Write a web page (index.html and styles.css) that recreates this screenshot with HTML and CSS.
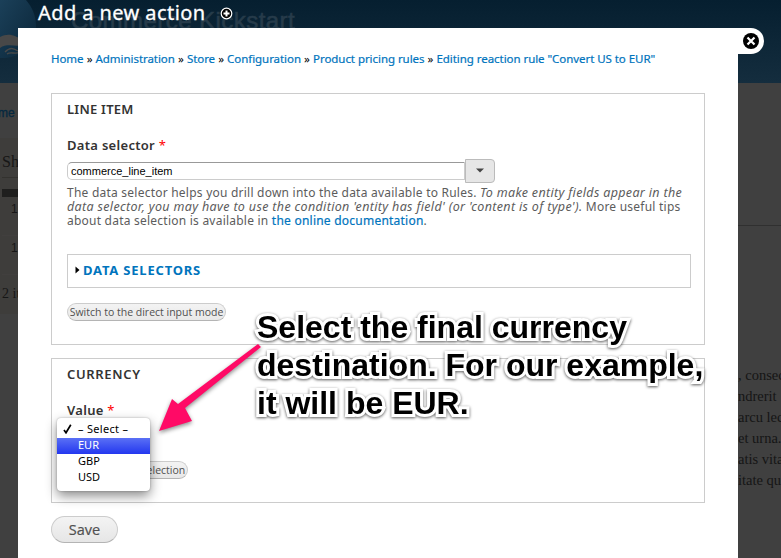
FILE: index.html
```html
<!DOCTYPE html>
<html lang="en">
<head>
<meta charset="utf-8">
<title>Add a new action</title>
<link rel="stylesheet" href="styles.css">
</head>
<body>
<div class="site">
  <header class="site-header">
    <svg class="drop" width="40" height="62" viewBox="0 0 40 62">
      <defs><linearGradient id="dg" x1="0" y1="0" x2="1" y2="1"><stop offset="0" stop-color="#1b4059"/><stop offset="1" stop-color="#0a2538"/></linearGradient></defs>
      <path d="M0 0H26C32 7 36 15 36 27C36 46 20 59 0 58Z" fill="url(#dg)"/>
      <path d="M0 37C8 33 14 34 27 43C19 49 8 42 0 48Z" fill="#484848"/>
      <path d="M5 52C10 47 13 48 18 51M7 54C11 51 15 55 20 52" stroke="#484848" stroke-width="1.3" fill="none"/>
    </svg>
    <span class="site-name">Commerce Kickstart</span>
  </header>
  <div class="site-body">
    <aside class="left">
      <div class="crumb">me</div>
      <div class="cart">
        <div class="cart-title">Sh</div>
        <div class="cart-bar"></div>
        <div class="cart-row">1</div>
        <div class="cart-row">1</div>
        <div class="cart-total">2 it</div>
      </div>
    </aside>
    <section class="right">
      <div class="rule"></div>
      <div class="lorem">, consec<br>ndrerit<br>arcu lec<br>et urna.<br>atis vita<br>itate qu</div>
    </section>
  </div>
</div>

<div class="overlay">
  <div class="title-bar">
    <h1>Add a new action</h1>
    <svg width="13" height="13" viewBox="0 0 13 13"><circle cx="6.5" cy="6.5" r="5.3" fill="#000" stroke="#fff" stroke-width="1.2"/><path d="M6.5 3.5v6M3.5 6.5h6" stroke="#fff" stroke-width="2"/></svg>
  </div>
  <main class="panel">
    <div class="close"><svg width="16" height="16" viewBox="0 0 16 16"><circle cx="8" cy="8" r="8"/><path d="M4.5 4.5l7 7M11.5 4.5l-7 7" stroke="#fff" stroke-width="2.2"/></svg></div>
    <nav class="breadcrumb"><a>Home</a> <i>»</i> <a>Administration</a> <i>»</i> <a>Store</a> <i>»</i> <a>Configuration</a> <i>»</i> <a>Product pricing rules</a> <i>»</i> <a>Editing reaction rule "Convert US to EUR"</a></nav>

    <section class="fieldset line-item">
      <h2>LINE ITEM</h2>
      <label>Data selector <b>*</b></label>
      <div class="combo"><div class="input">commerce_line_item</div><div class="combo-btn"><svg width="8" height="5" viewBox="0 0 8 5"><path d="M0 0.5H8L4 4.5Z" fill="#444"/></svg></div></div>
      <div class="help">
        <div>The data selector helps you drill down into the data available to Rules. <em>To make entity fields appear in the</em></div>
        <div><em>data selector, you may have to use the condition 'entity has field' (or 'content is of type').</em> More useful tips</div>
        <div>about data selection is available in <a>the online documentation</a>.</div>
      </div>
      <div class="selectors"><svg width="5" height="8" viewBox="0 0 5 8"><path d="M0.5 0.5L4.5 4L0.5 7.5Z"/></svg><a>DATA SELECTORS</a></div>
      <div class="pill">Switch to the direct input mode</div>
    </section>

    <section class="fieldset currency">
      <h2>CURRENCY</h2>
      <label>Value <b>*</b></label>
      <div class="pill">Switch to data selection</div>
      <div class="menu">
        <div class="option first"><svg class="check" width="9" height="10" viewBox="0 0 9 10"><path d="M1 6L3 8.8L7.8 0.8" fill="none" stroke="#000" stroke-width="1.7"/></svg>– Select –</div>
        <div class="option active">EUR</div>
        <div class="option">GBP</div>
        <div class="option">USD</div>
      </div>
    </section>
    <div class="save">Save</div>
  </main>
</div>

<svg class="arrow" width="120" height="110" viewBox="0 0 120 110"><path d="M108 4L111 7L35 68L42 81L9 91L22 59L28 64Z" fill="#ff0a66"/></svg>
<div class="callout"><div>Select the final currency</div><div>destination. For our example,</div><div>it will be EUR.</div></div>
</body>
</html>
```

FILE: styles.css
```css
* { box-sizing: border-box; }
body { margin: 0; width: 781px; height: 558px; overflow: hidden; position: relative; background: #404040; font-family: "Noto Sans", "Open Sans", sans-serif; }
h1, h2 { margin: 0; }

.site { height: 558px; display: flex; flex-direction: column; }
.site-header { height: 83px; background: linear-gradient(#061f30, #142d3e); display: flex; align-items: flex-start; overflow: hidden; }
.drop { flex: none; }
.site-name { margin: 8px 0 0 31px; font: 24px/26px "Liberation Sans", sans-serif; color: #263b4a; -webkit-text-stroke: 0.6px #263b4a; letter-spacing: 0.45px; white-space: nowrap; }
.site-body { flex: 1; display: flex; justify-content: space-between; }
.left { width: 18px; overflow: hidden; white-space: nowrap; }
.crumb { height: 55px; padding: 21px 0 0 0; margin-left: -2px; font: 12px/18px "Liberation Sans", sans-serif; color: #05283f; -webkit-text-stroke: 0.3px #05283f; }
.cart { height: 176px; background: #3e3d3b; padding-left: 2px; font: 14px/18px "Liberation Serif", serif; color: #161616; }
.cart-title { height: 40px; padding-top: 15px; font-size: 16px; border-bottom: 1px solid #33322f; }
.cart-bar { height: 8px; margin-top: 11px; background: #1f1f1e; }
.cart-row { height: 39px; padding: 3px 0 0 9px; font: 12px/18px "Liberation Sans", sans-serif; border-bottom: 1px solid #413f3e; }
.cart-total { padding-top: 10px; }
.right { width: 43px; overflow: hidden; white-space: nowrap; }
.rule { height: 143px; border-bottom: 1px solid #303030; }
.lorem { margin-top: 139px; font: 14.5px/21px "Liberation Serif", serif; color: #151515; }

.overlay { position: absolute; inset: 0; padding: 0 43px 0 18px; display: flex; flex-direction: column; }
.title-bar { height: 28px; padding-left: 20px; display: flex; color: #fff; }
.title-bar h1 { width: 182px; font: 20px/26px "Noto Sans", sans-serif; letter-spacing: 0.42px; white-space: nowrap; -webkit-text-stroke: 0.3px #fff; }
.title-bar svg { margin-top: 7px; }
.panel { position: relative; flex: 1; background: #fff; padding: 23px 33px 0; }
.close { position: absolute; left: 720px; top: 0; width: 26px; height: 26px; padding: 5px 0 0 5px; background: #fff; border-radius: 0 13px 13px 0; }
.close svg { display: block; }
.breadcrumb { height: 42px; font-size: 11.5px; line-height: 16px; letter-spacing: -0.055px; white-space: nowrap; color: #000; }
.breadcrumb a { -webkit-text-stroke: 0.2px #0074bd; }
.breadcrumb i { font-style: normal; margin: 0 0.2px; }
a { color: #0074bd; }

.fieldset { position: relative; border: 1px solid #ccc; padding: 7px 13px 0 15px; color: #333; }
.fieldset h2 { height: 36px; font: 600 13px/17px "Noto Sans", sans-serif; letter-spacing: 0.25px; }
.currency h2 { letter-spacing: 0.65px; }
.fieldset label { display: block; font: 600 13px/17px "Noto Sans", sans-serif; letter-spacing: 0.3px; white-space: nowrap; }
.fieldset label b { color: #f00; font-weight: 400; }
.line-item { height: 252px; }
.currency { height: 145px; margin-top: 13px; }
.combo { display: flex; align-items: center; height: 25px; margin-top: 4px; }
.input { width: 398px; height: 18px; border: 1px solid #ccc; border-top-color: #999; border-radius: 5px 0 0 5px; padding-left: 3px; font: 11px/17px "Liberation Sans", sans-serif; color: #000; }
.combo-btn { width: 30px; height: 24px; border: 1px solid #bbb; border-radius: 0 4px 4px 0; background: #e6e6e6; display: flex; align-items: center; justify-content: center; }
.help { margin-top: 3px; font-size: 12px; line-height: 14px; letter-spacing: 0.23px; color: #5c5c5c; white-space: nowrap; }
.help div { height: 14px; }
.help em { font-size: 12.5px; letter-spacing: 0.34px; }
.help a { -webkit-text-stroke: 0.2px #0074bd; }
.selectors { height: 34px; margin-top: 26px; border: 1px solid #ccc; padding: 0 0 2px 7px; display: flex; align-items: center; gap: 3px; font-size: 13px; font-weight: 700; letter-spacing: 0.8px; }
.pill { width: 159px; height: 18px; margin-top: 15px; border: 1px solid #ccc; border-bottom-color: #b4b4b4; border-radius: 9px; background: linear-gradient(#f3f3f3, #e8e8e8); font: 10.5px/16px "Open Sans", sans-serif; color: #505050; text-align: center; white-space: nowrap; }
.currency .pill { width: 121px; margin-top: 42px; }
.menu { position: absolute; left: 5px; top: 59px; width: 93px; height: 73px; padding-top: 4px; border-radius: 4px; background: #fff; box-shadow: 0 5px 12px rgba(0,0,0,.45), 0 0 2px rgba(0,0,0,.3); font-size: 11px; color: #000; }
.option { position: relative; height: 16px; padding-left: 21px; line-height: 14px; white-space: nowrap; }
.first { letter-spacing: 0.3px; }
.active { background: linear-gradient(#5a70f5, #2337ef); color: #fff; }
.check { position: absolute; left: 6px; top: 2px; }
.save { width: 67px; height: 27px; margin-top: 13px; border: 1px solid #ccc; border-bottom-color: #b4b4b4; border-radius: 14px; background: linear-gradient(#f3f3f3, #e6e6e6); font: 14.5px/25px "Open Sans", sans-serif; color: #505050; -webkit-text-stroke: 0.2px #505050; text-align: center; }

.arrow { position: absolute; left: 150px; top: 340px; filter: drop-shadow(0 2px 2px rgba(0,0,0,.45)); overflow: visible; }
.callout { position: absolute; left: 257px; top: 308px; font: bold 32px/38px "Liberation Sans", sans-serif; color: #000; white-space: nowrap; -webkit-text-stroke: 6px #fff; paint-order: stroke fill; filter: drop-shadow(0 1px 1.5px rgba(0,0,0,.65)); }
```
